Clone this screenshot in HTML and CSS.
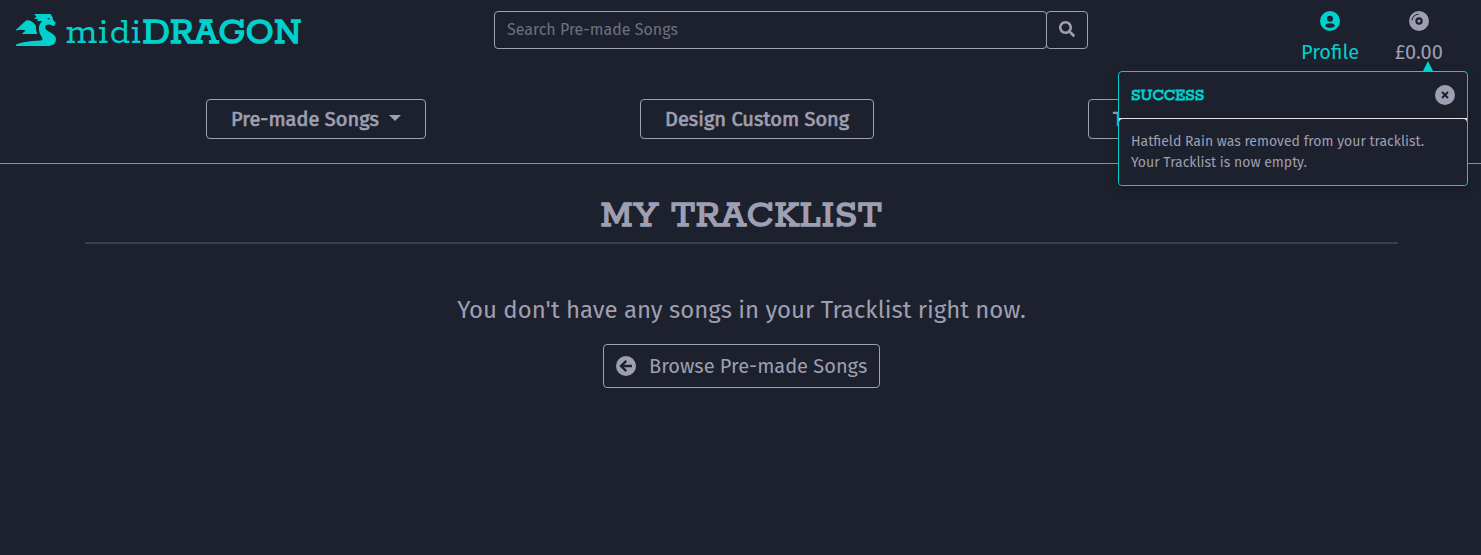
FILE: index.html
```html
<!DOCTYPE html>
<html lang="en">
<head>
<meta charset="utf-8">
<title>midiDRAGON</title>
<link rel="stylesheet" href="styles.css">
</head>
<body>
<header class="header">
  <div class="topbar">
    <a class="brand">
      <svg class="dragon" viewBox="0 0 40 32" width="40" height="32"><path d="M18 0h16.500l2 3 .6 3L39.500 8.500c.3 2-.8 3.300-2.300 3.500l-1.800-.8c-2.400-1.200-6.200-.8-6.200 2.300 0 4.200 10.800 5.600 10.800 11.500 0 4.500-3.500 7-8.500 7H0v-1.500C5 28.300 12 27.300 20 26.800c3.500-.2 6.500-.3 6.500-1.800 0-2.200-3.600-4.500-3.600-10.500 0-3 1.100-5.500 3.600-7.500h-5.700l1.500-1.700L18 4.500l2.600-1.700zM0 15.800 10 6.500c3.300-.8 6 .2 9.800 4.800.2 3.500.4 6.200 1.600 8.700H5.800c1.500-1.500 2.700-2.500 4.200-3.200-3.500-1.700-6.300-1.300-10-.3z" fill="currentColor"/><path d="m31 4 3 .3-1 1.400z" fill="#1d212d"/></svg>
      <span class="wordmark">midi<b>DRAGON</b></span>
    </a>
    <form class="search">
      <input class="search-input" placeholder="Search Pre-made Songs" aria-label="Search">
      <button class="search-btn" type="button" aria-label="Search songs"><svg width="16" height="16" viewBox="0 0 512 512"><path fill="currentColor" d="M505 442.700 405.300 343c-4.500-4.500-10.600-7-17-7H372c27.600-35.300 44-79.700 44-128C416 93.100 322.900 0 208 0S0 93.100 0 208s93.100 208 208 208c48.300 0 92.700-16.400 128-44v16.300c0 6.400 2.500 12.500 7 17l99.700 99.700c9.400 9.400 24.600 9.400 33.900 0l28.300-28.300c9.400-9.400 9.400-24.600.1-34zM208 336c-70.700 0-128-57.200-128-128 0-70.700 57.200-128 128-128 70.700 0 128 57.200 128 128 0 70.700-57.200 128-128 128z"/></svg></button>
    </form>
    <div class="account">
      <a class="account-link profile"><svg width="20" height="20" viewBox="0 0 20 20"><circle cx="10" cy="10" r="10" fill="currentColor"/><circle cx="10" cy="7.700" r="3" fill="#1d212d"/><path d="M5 15c.5-2 2-2.800 5-2.800s4.500.8 5 2.800c-1.500 1.300-3 1.800-5 1.800S6.500 16.300 5 15z" fill="#1d212d"/></svg><span>Profile</span></a>
      <a class="account-link total"><svg width="20" height="20" viewBox="0 0 20 20"><circle cx="10" cy="10" r="10" fill="currentColor"/><circle cx="10" cy="10" r="2.600" fill="none" stroke="#1d212d" stroke-width="2.200"/><path d="M2.900 9.500a6.800 6.800 0 0 1 6.600-6.300" fill="none" stroke="#1d212d" stroke-width="1"/></svg><span>£0.00</span></a>
    </div>
  </div>
  <nav class="nav">
    <a class="nav-btn nav-songs">Pre-made Songs<i class="caret"></i></a>
    <a class="nav-btn nav-custom">Design Custom Song</a>
    <a class="nav-btn nav-last">Testimonials</a>
  </nav>
</header>
<main class="main">
  <h1 class="title">MY TRACKLIST</h1>
  <p class="empty">You don't have any songs in your Tracklist right now.</p>
  <a class="browse"><svg width="20" height="20" viewBox="0 0 20 20"><circle cx="10" cy="10" r="10" fill="currentColor"/><path d="M10.300 4.800 5 10l5.300 5.200M5.500 10H16" fill="none" stroke="#1d212d" stroke-width="2.400"/></svg><span>Browse Pre-made Songs</span></a>
</main>
<aside class="toast">
  <i class="toast-arrow"></i>
  <div class="toast-head"><strong class="toast-title">SUCCESS</strong><svg width="20" height="20" viewBox="0 0 20 20"><circle cx="10" cy="10" r="10" fill="#9e9fb2"/><path d="m7 7 6 6m0-6-6 6" stroke="#1d212d" stroke-width="2"/></svg></div>
  <div class="toast-body">Hatfield Rain was removed from your tracklist.<br>Your Tracklist is now empty.</div>
</aside>
</body>
</html>
```
FILE: styles.css
```css
* { box-sizing: border-box; }
body { margin: 0; height: 555px; overflow: hidden; background: #1d212d; color: #9e9fb2; font: 16px/1.5 "Fira Sans", "Noto Sans", sans-serif; }
svg { display: block; flex: none; }
.header { height: 164px; border-bottom: 1px solid #00d1cd; }
.topbar { display: flex; height: 99px; padding-left: 16px; }
.brand { display: flex; width: 478px; color: #00d1cd; }
.dragon { margin-top: 14px; }
.wordmark { margin: 13px 0 0 10px; height: 40px; font: 400 39px/40px "Rokkitt", "DejaVu Serif", serif; letter-spacing: 1.2px; white-space: nowrap; }
.wordmark b { font-weight: 400; letter-spacing: .25px; -webkit-text-stroke: 1.4px #00d1cd; }
.search { display: flex; width: 594px; height: 38px; margin-top: 11px; }
.search-input { width: 553px; padding: 6px 12px; border: 1px solid #9e9fb2; border-radius: 4px; background: transparent; color: #9e9fb2; font: inherit; }
.search-input::placeholder { color: #6c717e; opacity: 1; }
.search-btn { display: flex; align-items: center; justify-content: center; width: 42px; margin-left: -1px; padding: 0 0 2px; border: 1px solid #9e9fb2; border-radius: 4px; background: transparent; color: #9e9fb2; }
.account { display: flex; margin-left: 207px; padding-top: 11px; font-size: 20px; gap: 25px; }
.account-link { display: flex; flex-direction: column; align-items: center; width: 70px; white-space: nowrap; }
.account-link span { line-height: 30px; margin-top: 6px; }
.total { width: 58px; }
.profile { color: #00d1cd; }
.nav { display: flex; gap: 214px; padding-left: 206px; }
.nav-btn { display: flex; align-items: center; height: 40px; padding: 0 24px; border: 1px solid #9e9fb2; border-radius: 4px; font-size: 20px; letter-spacing: .03px; -webkit-text-stroke: .7px #9e9fb2; white-space: nowrap; }
.nav-songs { width: 220px; }
.nav-custom { width: 234px; }
.nav-last { width: 186px; }
.caret { margin-left: auto; border: 6px solid transparent; border-top-color: #9e9fb2; border-bottom: 0; position: relative; top: -1px; }
.main { display: flex; flex-direction: column; align-items: center; padding: 29px 0 0 2px; }
.title { width: 1313px; height: 51px; margin: 0; border-bottom: 2px solid #3c3f4b; font: 400 40px/46px "Rokkitt", "DejaVu Serif", serif; letter-spacing: .85px; -webkit-text-stroke: 1.5px #9e9fb2; text-align: center; }
.empty { height: 36px; margin: 48px 0 16px; font-size: 24px; line-height: 36px; white-space: nowrap; }
.browse { display: flex; align-items: center; width: 277px; height: 44px; padding: 0 12px; border: 1px solid #9e9fb2; border-radius: 4px; font-size: 20px; gap: 13px; white-space: nowrap; }
.toast { position: absolute; top: 71px; left: 1118px; width: 350px; height: 115px; border: 1px solid #00d1cd; border-radius: 4px; background: linear-gradient(#e2e2e5, #e2e2e5) 0 46px / 100% 6px no-repeat, #1d212d; box-shadow: 0 4px 12px rgba(0, 0, 0, .18); }
.toast-arrow { position: absolute; top: -11px; right: 34px; border: 5px solid transparent; border-bottom: 10px solid #00d1cd; border-top: 0; }
.toast-head { display: flex; align-items: center; justify-content: space-between; height: 47px; padding: 0 12px; border-bottom: 1px solid #e2e2e5; }
.toast-title { font: 400 17px/21px "Rokkitt", "DejaVu Serif", serif; color: #00d1cd; -webkit-text-stroke: .8px #00d1cd; }
.toast-body { padding: 12px; border-radius: 4px; background: #1d212d; font-size: 14px; line-height: 21px; white-space: nowrap; }
```
